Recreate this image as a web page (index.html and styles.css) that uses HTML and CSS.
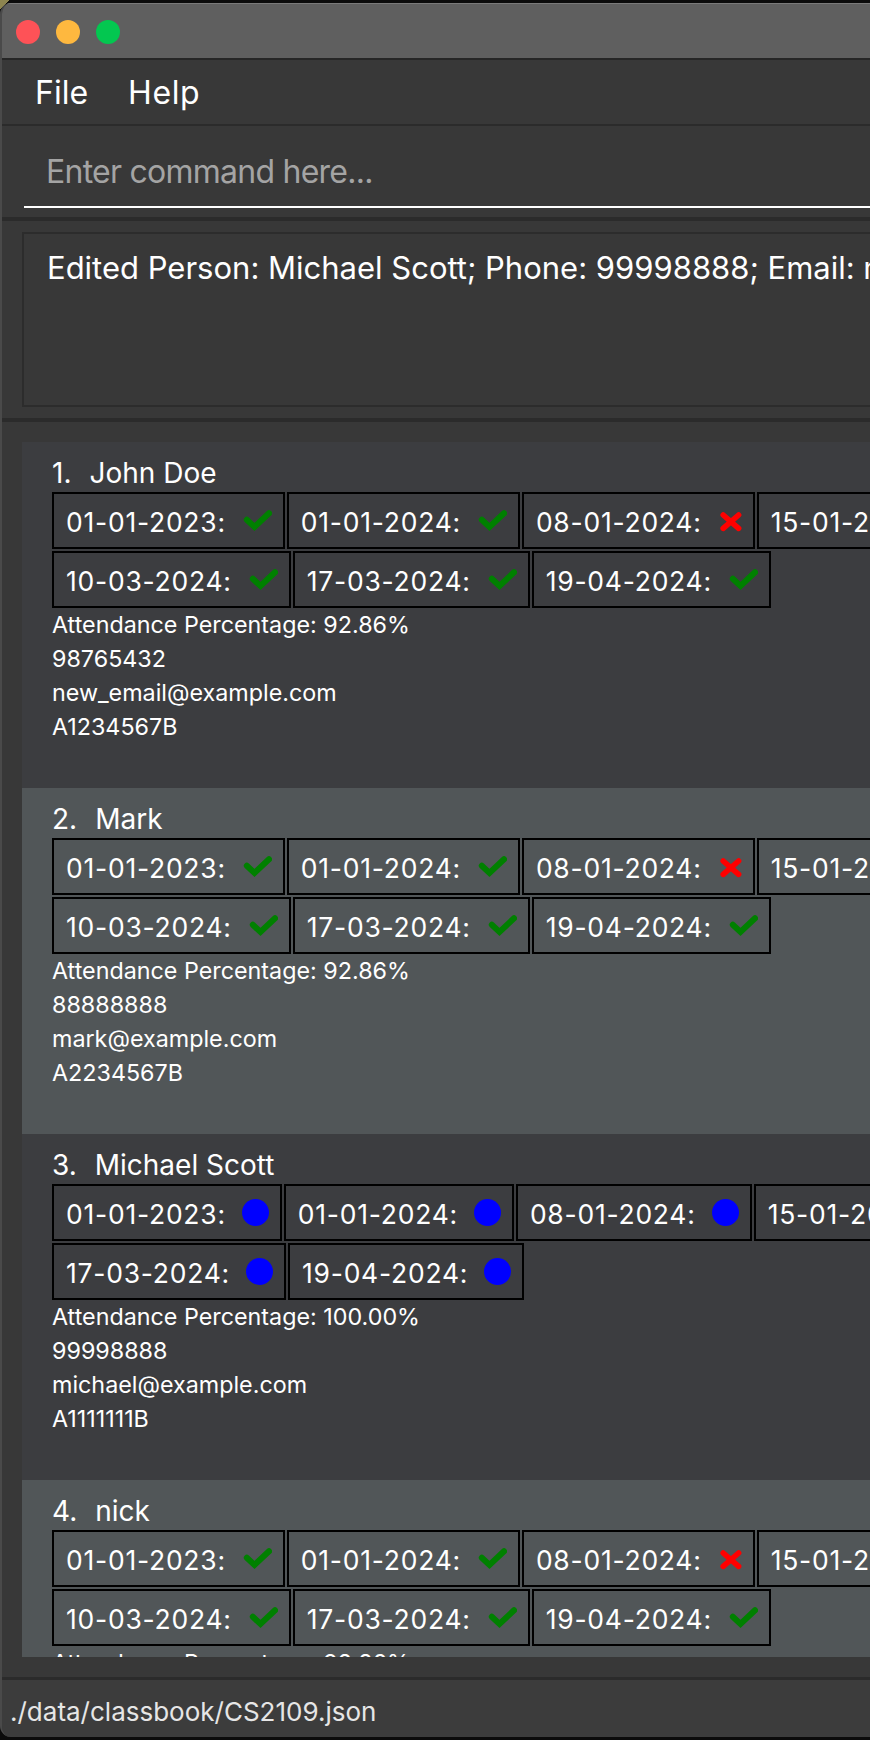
FILE: index.html
```html
<!DOCTYPE html>
<html lang="en">
<head>
<meta charset="utf-8">
<title>ClassBook</title>
<link rel="stylesheet" href="styles.css">
</head>
<body>
<svg class="defs" width="0" height="0" aria-hidden="true">
  <symbol id="i-check" viewBox="0 0 30 30">
    <polyline points="4.8,12.8 12.5,20 27,6.3" fill="none" stroke="#008000" stroke-width="6" stroke-linecap="round" stroke-linejoin="miter"/>
  </symbol>
  <symbol id="i-cross" viewBox="0 0 24 30">
    <path d="M5.2 8 L20.6 21.4 M20.6 8 L5.2 21.4" fill="none" stroke="#ff0000" stroke-width="5.6" stroke-linecap="round"/>
  </symbol>
  <symbol id="i-dot" viewBox="0 0 27 30">
    <circle cx="13.5" cy="13.5" r="13.5" fill="#0000ff"/>
  </symbol>
</svg>

<div class="window">
  <div class="titlebar">
    <span class="light red"></span>
    <span class="light yellow"></span>
    <span class="light green"></span>
  </div>

  <div class="menubar">
    <span class="menu-item">File</span>
    <span class="menu-item">Help</span>
  </div>

  <div class="command">
    <input class="command-field" type="text" placeholder="Enter command here...">
  </div>

  <div class="result">
    <div class="result-box">Edited Person: Michael Scott; Phone: 99998888; Email: michael@example.com; Student ID: A1111111B</div>
  </div>

  <div class="list">
    <div class="list-view">

      <div class="card">
        <div class="name"><span class="index">1.</span>John Doe</div>
        <div class="tag-row">
          <div class="tag"><span>01-01-2023:</span><svg class="ic"><use href="#i-check"/></svg></div>
          <div class="tag"><span>01-01-2024:</span><svg class="ic"><use href="#i-check"/></svg></div>
          <div class="tag"><span>08-01-2024:</span><svg class="ic cross"><use href="#i-cross"/></svg></div>
          <div class="tag"><span>15-01-2024:</span><svg class="ic"><use href="#i-check"/></svg></div>
          <div class="tag"><span>22-01-2024:</span><svg class="ic"><use href="#i-check"/></svg></div>
        </div>
        <div class="tag-row">
          <div class="tag"><span>10-03-2024:</span><svg class="ic"><use href="#i-check"/></svg></div>
          <div class="tag"><span>17-03-2024:</span><svg class="ic"><use href="#i-check"/></svg></div>
          <div class="tag"><span>19-04-2024:</span><svg class="ic"><use href="#i-check"/></svg></div>
        </div>
        <div class="detail">Attendance Percentage: 92.86%</div>
        <div class="detail">98765432</div>
        <div class="detail">new_email@example.com</div>
        <div class="detail">A1234567B</div>
      </div>

      <div class="card alt">
        <div class="name"><span class="index">2.</span>Mark</div>
        <div class="tag-row">
          <div class="tag"><span>01-01-2023:</span><svg class="ic"><use href="#i-check"/></svg></div>
          <div class="tag"><span>01-01-2024:</span><svg class="ic"><use href="#i-check"/></svg></div>
          <div class="tag"><span>08-01-2024:</span><svg class="ic cross"><use href="#i-cross"/></svg></div>
          <div class="tag"><span>15-01-2024:</span><svg class="ic"><use href="#i-check"/></svg></div>
          <div class="tag"><span>22-01-2024:</span><svg class="ic"><use href="#i-check"/></svg></div>
        </div>
        <div class="tag-row">
          <div class="tag"><span>10-03-2024:</span><svg class="ic"><use href="#i-check"/></svg></div>
          <div class="tag"><span>17-03-2024:</span><svg class="ic"><use href="#i-check"/></svg></div>
          <div class="tag"><span>19-04-2024:</span><svg class="ic"><use href="#i-check"/></svg></div>
        </div>
        <div class="detail">Attendance Percentage: 92.86%</div>
        <div class="detail">88888888</div>
        <div class="detail">mark@example.com</div>
        <div class="detail">A2234567B</div>
      </div>

      <div class="card">
        <div class="name"><span class="index">3.</span>Michael Scott</div>
        <div class="tag-row">
          <div class="tag"><span>01-01-2023:</span><svg class="ic dot"><use href="#i-dot"/></svg></div>
          <div class="tag"><span>01-01-2024:</span><svg class="ic dot"><use href="#i-dot"/></svg></div>
          <div class="tag"><span>08-01-2024:</span><svg class="ic dot"><use href="#i-dot"/></svg></div>
          <div class="tag"><span>15-01-2024:</span><svg class="ic dot"><use href="#i-dot"/></svg></div>
          <div class="tag"><span>22-01-2024:</span><svg class="ic dot"><use href="#i-dot"/></svg></div>
        </div>
        <div class="tag-row">
          <div class="tag"><span>17-03-2024:</span><svg class="ic dot"><use href="#i-dot"/></svg></div>
          <div class="tag"><span>19-04-2024:</span><svg class="ic dot"><use href="#i-dot"/></svg></div>
        </div>
        <div class="detail">Attendance Percentage: 100.00%</div>
        <div class="detail">99998888</div>
        <div class="detail">michael@example.com</div>
        <div class="detail">A1111111B</div>
      </div>

      <div class="card alt">
        <div class="name"><span class="index">4.</span>nick</div>
        <div class="tag-row">
          <div class="tag"><span>01-01-2023:</span><svg class="ic"><use href="#i-check"/></svg></div>
          <div class="tag"><span>01-01-2024:</span><svg class="ic"><use href="#i-check"/></svg></div>
          <div class="tag"><span>08-01-2024:</span><svg class="ic cross"><use href="#i-cross"/></svg></div>
          <div class="tag"><span>15-01-2024:</span><svg class="ic"><use href="#i-check"/></svg></div>
          <div class="tag"><span>22-01-2024:</span><svg class="ic"><use href="#i-check"/></svg></div>
        </div>
        <div class="tag-row">
          <div class="tag"><span>10-03-2024:</span><svg class="ic"><use href="#i-check"/></svg></div>
          <div class="tag"><span>17-03-2024:</span><svg class="ic"><use href="#i-check"/></svg></div>
          <div class="tag"><span>19-04-2024:</span><svg class="ic"><use href="#i-check"/></svg></div>
        </div>
        <div class="detail">Attendance Percentage: 92.86%</div>
        <div class="detail">77777777</div>
        <div class="detail">nick@example.com</div>
        <div class="detail">A3234567B</div>
      </div>

    </div>
  </div>

  <div class="status">./data/classbook/CS2109.json</div>
</div>
</body>
</html>
```

FILE: styles.css
```css
* {
  box-sizing: border-box;
}

html,
body {
  margin: 0;
  height: 100%;
  overflow: hidden;
}

body {
  background: linear-gradient(135deg, #8d8550 0, #8d8550 7px, #0b0b0b 7px);
  font-family: Inter, "Noto Sans", "Liberation Sans", sans-serif;
  color: #ffffff;
}

.defs {
  position: absolute;
  width: 0;
  height: 0;
  overflow: hidden;
}

.window {
  width: 1500px;
  height: 1734px;
  margin-top: 3px;
  display: flex;
  flex-direction: column;
  background: #383838;
  border-left: 2px solid #4a4a4a;
  border-top-left-radius: 11px;
  border-bottom-left-radius: 11px;
  overflow: hidden;
}

/* title bar */
.titlebar {
  flex: 0 0 57px;
  display: flex;
  align-items: flex-start;
  gap: 16px;
  padding: 17px 0 0 14px;
  background: #5f5f5f;
  border-bottom: 2px solid #262626;
  box-shadow: inset 0 1px 0 #7a7a7a;
}

.light {
  width: 24px;
  height: 24px;
  border-radius: 50%;
}

.red { background: #fe5257; }
.yellow { background: #feb83f; }
.green { background: #03c750; }

/* menu */
.menubar {
  flex: 0 0 66px;
  display: flex;
  gap: 40px;
  padding: 2px 0 0 33px;
  background: #383838;
  border-bottom: 2px solid #2b2b2b;
}

.menu-item {
  font-size: 32px;
  line-height: 62px;
  color: #ffffff;
}

.menu-item + .menu-item {
  letter-spacing: 0.6px;
}

/* command box */
.command {
  flex: 0 0 95px;
  padding: 25.65px 0 9px 22px;
  background: #383838;
  border-bottom: 4px solid #2b2b2b;
}

.command-field {
  display: block;
  width: 100%;
  height: 56.35px;
  margin: 0;
  padding: 0 0 14.35px 22px;
  border: 0;
  border-bottom: 2px solid #ffffff;
  background: transparent;
  outline: none;
  font-family: inherit;
  font-size: 32px;
  letter-spacing: -0.75px;
  line-height: 40px;
  color: #ffffff;
}

.command-field::placeholder {
  color: #a4a4a4;
}

/* result */
.result {
  flex: 0 0 201px;
  padding: 11px 0 11px 20px;
  background: #383838;
  border-bottom: 4px solid #2b2b2b;
}

.result-box {
  height: 175px;
  padding: 14px 0 0 23px;
  border: 2px solid #2c2c2c;
  font-size: 31px;
  line-height: 40px;
  white-space: nowrap;
  color: #ffffff;
}

/* list */
.list {
  flex: 1 1 auto;
  padding: 20px 0 20px 20px;
  background: #383838;
  border-bottom: 3px solid #2b2b2b;
  min-height: 0;
}

.list-view {
  height: 100%;
  overflow: hidden;
}

.card {
  height: 346px;
  padding: 13px 0 0 30px;
  background: #3c3d40;
}

.card.alt {
  background: #515658;
}

.name {
  font-size: 28px;
  line-height: 36px;
  white-space: nowrap;
}

.index {
  margin-right: 18px;
}

.tag-row {
  display: flex;
  gap: 2px;
  margin-top: 1px;
}

.tag-row + .tag-row {
  margin-top: 2px;
}

.tag {
  flex: 0 0 auto;
  height: 57px;
  display: flex;
  align-items: center;
  padding: 2px 11px 0 12px;
  border: 2px solid #000000;
  font-size: 26.5px;
  letter-spacing: 0.75px;
  white-space: nowrap;
}

.ic {
  width: 30px;
  height: 30px;
  margin-left: 16px;
}

.ic.dot {
  width: 27px;
}

.ic.cross {
  width: 24px;
}

.detail {
  font-size: 23.3px;
  line-height: 34px;
  white-space: nowrap;
}

/* status bar */
.status {
  flex: 0 0 57px;
  padding: 17px 0 0 8px;
  background: #3c3c3c;
  font-size: 26px;
  line-height: 30px;
  color: #e6e6e6;
  white-space: nowrap;
}
```
